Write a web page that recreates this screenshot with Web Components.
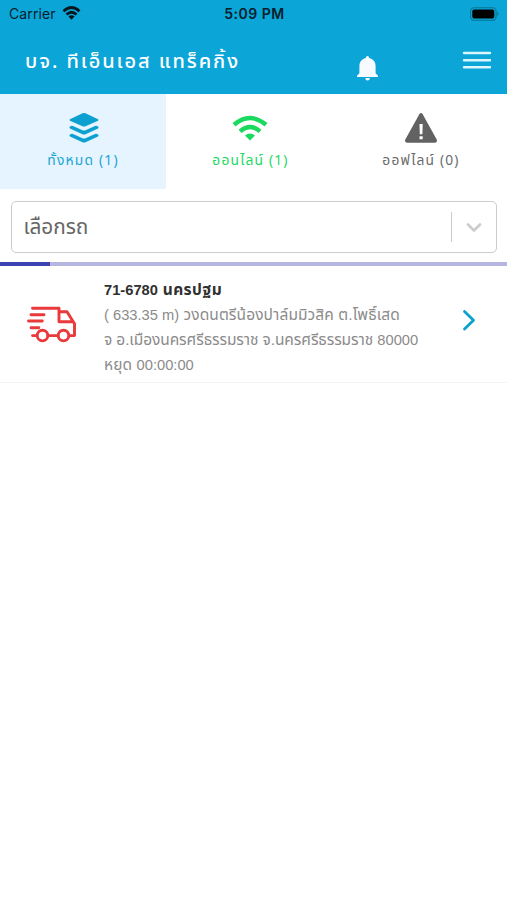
<!DOCTYPE html>
<html lang="th"><head><meta charset="utf-8"><title>Tracking</title>
<style>html,body{margin:0;height:100%;background:#fff;overflow:hidden}body{font-family:"Noto Sans Thai","Noto Sans","Liberation Sans",sans-serif}</style></head>
<body>
<tracking-app></tracking-app>
<script>
const define=(name,html)=>customElements.define(name,class extends HTMLElement{
  constructor(){super();this.attachShadow({mode:'open'}).innerHTML=html;}
});
define('status-bar',`<style>
:host{display:grid;grid-template-columns:1fr auto 1fr;align-items:center;height:27px;padding:0 7px 0 9px;color:#06202b;font:14px/27px Inter,sans-serif}
.l{display:flex;align-items:center;gap:6px;letter-spacing:.1px}.l svg{margin-top:-2px}.c{font-weight:600;font-size:14px;letter-spacing:.5px}.r{justify-self:end;display:flex}
</style>
<div class="l"><span>Carrier</span><svg width="19" height="14" viewBox="0 0 18 14"><g fill="none" stroke="#06161d" stroke-width="2.7"><path d="M1 5.2Q9-2.2 17 5.2M4 8.500Q9 4 14 8.500"/></g><path fill="#06161d" d="M6 10.500Q9 8.200 12 10.500L9 13.700Z"/></svg></div>
<div class="c">5:09 PM</div>
<div class="r"><svg width="30" height="14" viewBox="0 0 30 14"><rect x=".6" y=".7" width="25.5" height="12.6" rx="3.6" fill="none" stroke="#087493" stroke-width="1.1"/><rect x="2.3" y="2.5" width="22" height="9" rx="2" fill="#000"/><path d="M27.3 4.6q2.4 2.4 0 4.8z" fill="#087493"/></svg></div>`);
define('app-header',`<style>
:host{display:flex;height:67px;align-items:flex-start;color:#fff}
.t{width:332px;padding-left:25px;box-sizing:border-box;font-size:20px;line-height:28px;margin-top:21px;letter-spacing:1.93px;font-weight:500;white-space:nowrap}
.b{margin:29px 0 0 25px}.m{margin:21px 15px 0 auto}svg{display:block}
</style><div class="t"><slot></slot></div>
<svg class="b" width="21" height="25" viewBox="0 0 21 25"><path fill="#f7fbff" d="M10.5 0q1.6 0 1.7 2C16.5 3 18.6 6.3 18.6 10v7.3l2.4 2.5V21H0v-1.2l2.4-2.5V10C2.4 6.3 4.5 3 8.8 2q.1-2 1.7-2ZM8.3 22h4.6q-.2 2.5-2.3 2.5T8.3 22Z"/></svg>
<svg class="m" width="30" height="22" viewBox="0 0 30 22"><path stroke="#d8f6fc" stroke-width="2.4" stroke-linecap="round" d="M2 5h26M2 12.2h26M2 19.3h26"/></svg>`);
define('tab-item',`<style>
:host{display:flex;flex-direction:column;align-items:center;height:95px;box-sizing:border-box;padding-top:17px}
::slotted(svg){display:block;height:34px;margin-left:var(--shift,0)}
.x{font-size:13.8px;line-height:20px;margin-top:6px;letter-spacing:1.2px;white-space:nowrap}
</style><slot name="icon"></slot><div class="x"><slot></slot></div>`);
define('tab-strip',`<style>:host{display:grid;grid-template-columns:166px 169px 172px}</style><slot></slot>`);
define('select-box',`<style>
:host{display:flex;box-sizing:border-box;height:52px;margin:12px 10px 0 10.5px;border:1.5px solid #ccc;border-radius:5px;align-items:center;padding-left:12px;color:#666;font-size:20.8px}
.x{flex:1;white-space:nowrap;padding-top:1px}.s{width:1.5px;height:30px;background:#ccc}svg{margin:1px 14px 0 14px}
</style><span class="x"><slot></slot></span><i class="s"></i><svg width="16" height="10" viewBox="0 0 16 10"><path d="M2 1.5l6 6 6-6" fill="none" stroke="#ccc" stroke-width="2.6" stroke-linecap="round" stroke-linejoin="round"/></svg>`);
define('progress-line',`<style>:host{display:block;height:4px;margin-top:9px;background:#b6b5df}i{display:block;width:50px;height:4px;background:#3c43b2}</style><i></i>`);
define('vehicle-row',`<style>
:host{display:flex;height:117px;box-sizing:border-box;border-bottom:1.5px solid #f4f4f4;color:#8b8b8b;font-family:"Liberation Sans","Noto Sans Thai","Noto Sans",sans-serif}
.truck{margin:39px 0 0 26px}.c{margin:11px 0 0 27px;flex:1;font-size:15.5px;line-height:25px;white-space:nowrap}
.go{margin:42.500px 31px 0 0}
</style>
<svg class="truck" width="51" height="39" viewBox="0 0 51 39"><g fill="none" stroke="#e9393b" stroke-width="2.9" stroke-linecap="round" stroke-linejoin="round"><path d="M6.500 3.200H33v13.500h14M33 6.700h8l7.500 12v11.900h-5.200M5 9.700h13M2.500 16h13.800M5 22.800h7.800M6.500 30.600h4M22 30.600h10"/><circle cx="16.5" cy="30.6" r="5.3"/><circle cx="37.5" cy="30.6" r="5.3"/></g></svg>
<div class="c"><slot></slot></div>
<svg class="go" width="14" height="22" viewBox="0 0 14 22"><path d="M2.500 2.500L11.500 11.300l-9 8.700" fill="none" stroke="#0ba2ce" stroke-width="2.8" stroke-linecap="round" stroke-linejoin="round"/></svg>`);
define('text-line',`<style>:host{display:block;height:25px;letter-spacing:var(--ls,0)}:host([strong]){font-weight:700;color:#303030}::slotted(span){font-size:14.7px;letter-spacing:0}</style><slot></slot>`);
define('tracking-app',`<style>
:host{display:flex;flex-direction:column;width:507px;height:900px;background:#fff}
.top{background:#0ba5d7;height:94px}
.a{background:#e5f4fe;color:#1ba5d3;--shift:2px}.b{color:#1dd962;--shift:-1px}.c{color:#6b6b6b}
</style>
<div class="top"><status-bar></status-bar><app-header>บจ. ทีเอ็นเอส แทร็คกิ้ง</app-header></div>
<tab-strip>
<tab-item class="a"><svg slot="icon" width="32" height="34" viewBox="0 0 32 34"><g fill="#0ba0d0"><path d="M14.500 2.200q1.500-.6 3 0l12.500 6q1.300.8 0 1.600l-12.500 5.500q-1.500.6-3 0L2 9.800Q.7 9 2 8.200Z"/><path d="M2 15.400q1.700-1 3.500-.2l9 4q1.500.6 3 0l9-4q1.800-.8 3.500.2 1.300 1.200 0 2.200l-12.500 5.700q-1.500.6-3 0L2 17.600Q.7 16.600 2 15.400Z"/><path d="M2 23.400q1.700-1 3.500-.2l9 4q1.500.6 3 0l9-4q1.800-.8 3.500.2 1.300 1.200 0 2.200l-12.500 5.700q-1.500.6-3 0L2 25.600Q.7 24.600 2 23.400Z"/></g></svg>ทั้งหมด (1)</tab-item>
<tab-item class="b"><svg slot="icon" width="36" height="34" viewBox="0 0 36 34"><g fill="none" stroke="#19d95e" stroke-width="4.400"><path d="M2 13.800Q18 .3 34 13.800M8 20.300Q18 11.700 28 20.300"/></g><path fill="#19d95e" d="M13 24.500Q18 20.500 23 24.500L18 29.500Z"/></svg>ออนไลน์ (1)</tab-item>
<tab-item class="c"><svg slot="icon" width="34" height="34" viewBox="0 0 34 34"><path fill="#626262" d="M15.300 3.200q1.700-2.400 3.400 0l14 25.300q1 2.700-1.700 3.200H3q-2.700-.5-1.700-3.200Z"/><path d="M15.500 13h3.200l-.3 10.200h-2.600ZM15.500 25.300h3.200v3h-3.200Z" fill="#fff"/></svg>ออฟไลน์ (0)</tab-item>
</tab-strip>
<select-box>เลือกรถ</select-box>
<progress-line></progress-line>
<vehicle-row>
<text-line strong style="--ls:.45px"><span>71-6780</span> นครปฐม</text-line>
<text-line style="--ls:.1px"><span>( 633.35 m)</span> วงดนตรีน้องปาล์มมิวสิค ต.โพธิ์เสด</text-line>
<text-line style="--ls:-.1px">จ อ.เมืองนครศรีธรรมราช จ.นครศรีธรรมราช <span>80000</span></text-line>
<text-line style="--ls:.1px">หยุด <span>00:00:00</span></text-line>
</vehicle-row>`);
</script></body></html>
